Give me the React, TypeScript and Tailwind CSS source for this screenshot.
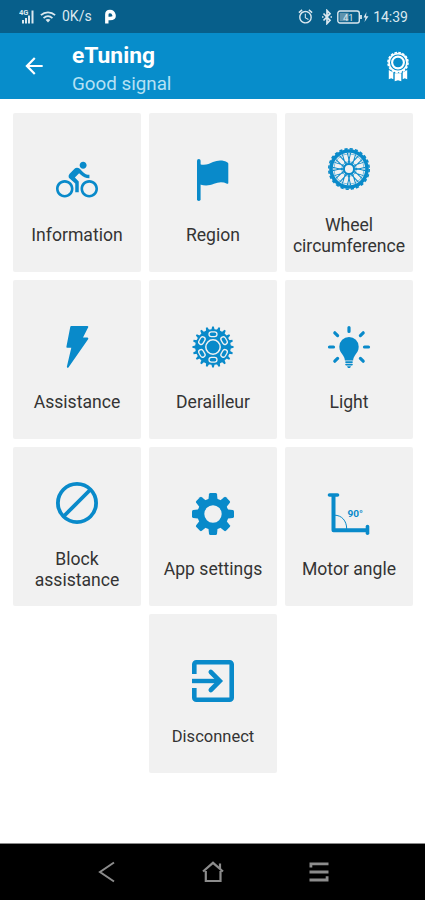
import type { ReactNode } from 'react'
import { clsx } from 'clsx'
import { MdAlarm, MdArrowBack, MdDirectionsBike } from 'react-icons/md'

const range = (count: number) => Array.from({ length: count }, (_, index) => index)

function TileIcon({ children }: { children: ReactNode }) {
  return (
    <svg viewBox="0 0 42 42" className="h-[42px] w-[42px] shrink-0 overflow-visible" fill="currentColor">
      {children}
    </svg>
  )
}

function FlagIcon() {
  return (
    <TileIcon>
      <rect x="5" y="0" width="3.6" height="42" rx="1.8" />
      <path d="M8 5.2C13 6.8 17 4.8 21 3 26 0.8 31.5 1 35.500 3.400a1.500 1.500 0 0 1 .8 1.300v19.200c0 .8-.7 1.100-1.300 .8-4-2-8.500-1.800-13 .1C17.500 26.700 13 27 8 25.500z" />
    </TileIcon>
  )
}

function WheelIcon() {
  return (
    <TileIcon>
      <g fill="none" stroke="currentColor">
        <circle cx="21" cy="21" r="18" strokeWidth="3.600" />
        <circle cx="21" cy="21" r="20.200" strokeWidth="1.600" strokeDasharray="3.200 2.090" />
        <circle cx="21" cy="21" r="15.200" strokeWidth=".5" />
        <circle cx="21" cy="21" r="5" strokeWidth="1.900" />
        <circle cx="21" cy="21" r="7.300" strokeWidth=".5" />
      </g>
      {range(12).map((index) => (
        <g key={index} transform={`rotate(${index * 30} 21 21)`} fill="none" stroke="currentColor" strokeWidth="1">
          <path d="M20 16 22.600 5M22 16 19.400 5" />
        </g>
      ))}
    </TileIcon>
  )
}

function BoltIcon() {
  return (
    <TileIcon>
      <path d="M15.300 0H31.500a.8.8 0 0 1 .7 1.200L27 11.500H31.300c.9 0 1.300 1 .8 1.700L12.600 41.200c-.7 1-2 .5-1.700-.7L15.300 21.800H11.300a.9.9 0 0 1-.9-1.100L14.300.8A1 1 0 0 1 15.300 0z" />
    </TileIcon>
  )
}

function ChainringIcon() {
  return (
    <TileIcon>
      <circle cx="21" cy="21" r="17.800" />
      {range(20).map((index) => (
        <path key={index} d="M19.300 4 20.200 .4H21.800L22.700 4z" transform={`rotate(${index * 18} 21 21)`} />
      ))}
      <circle cx="21" cy="21" r="7.200" fill="none" stroke="#f1f1f1" strokeWidth="1.500" />
      {range(6).map((index) => (
        <g key={index} transform={`rotate(${index * 60} 21 21)`}>
          <rect x="17" y="5.800" width="8" height="4.800" rx="2.400" fill="none" stroke="#f1f1f1" strokeWidth="1.300" />
        </g>
      ))}
    </TileIcon>
  )
}

function BulbIcon() {
  return (
    <TileIcon>
      <path d="M21 11a9.700 9.700 0 0 0-9.700 9.700c0 4 2 6.200 3.800 8.700 1 1.500 1.600 3 1.800 5h8.200c.2-2 .8-3.500 1.800-5 1.800-2.500 3.800-4.700 3.800-8.700A9.700 9.700 0 0 0 21 11z" />
      <rect x="17.200" y="35.300" width="7.600" height="1.700" rx=".8" />
      <rect x="17.200" y="37.700" width="7.600" height="1.700" rx=".8" />
      <path d="M19 40.200h4l-1 1.700h-2z" />
      <path
        d="M21 1.500V5.500M35.200 6.800 32.400 9.600M6.800 6.800 9.600 9.600M1.500 21H5.500M40.500 21H36.500M6.800 35.200 9.600 32.400M35.200 35.200 32.400 32.400"
        fill="none"
        stroke="currentColor"
        strokeWidth="3.200"
        strokeLinecap="round"
      />
    </TileIcon>
  )
}

function BlockIcon() {
  return (
    <TileIcon>
      <g fill="none" stroke="currentColor" strokeWidth="3.800">
        <circle cx="21" cy="21" r="19.100" />
        <path d="M7.500 34.500 34.500 7.500" />
      </g>
    </TileIcon>
  )
}

function GearIcon() {
  return (
    <TileIcon>
      <circle cx="21" cy="21" r="12.200" fill="none" stroke="currentColor" strokeWidth="7" />
      {range(8).map((index) => (
        <path
          key={index}
          d="M16.300 8 17 1.200Q17.200 0 18.400 0H23.600Q24.800 0 25 1.200L25.700 8z"
          transform={`rotate(${index * 45} 21 21)`}
        />
      ))}
    </TileIcon>
  )
}

function AngleIcon() {
  return (
    <TileIcon>
      <g fill="none" stroke="currentColor">
        <path d="M1.500 2H9.500" strokeWidth="3.600" strokeLinecap="round" />
        <path d="M5.500 2V37.200H38.500" strokeWidth="4" strokeLinejoin="round" />
        <path d="M39.500 33.500V40.300" strokeWidth="3.600" strokeLinecap="round" />
        <path d="M6.500 22.200C13.500 22.200 18.700 27.500 18.700 36" strokeWidth="1" />
      </g>
      <text x="19.500" y="24" fontSize="8.200" fontWeight="700" textLength="15.500" lengthAdjust="spacingAndGlyphs">
        90°
      </text>
    </TileIcon>
  )
}

function ExitIcon() {
  return (
    <TileIcon>
      <g fill="none" stroke="currentColor">
        <path d="M2.300 14V4.300a2 2 0 0 1 2-2H37.700a2 2 0 0 1 2 2V37.700a2 2 0 0 1-2 2H4.300a2 2 0 0 1-2-2V28" strokeWidth="4.600" />
        <path d="M0 21H27" strokeWidth="4.400" />
        <path d="M18.800 12 27.800 21 18.800 30" strokeWidth="4.600" strokeLinecap="round" />
      </g>
    </TileIcon>
  )
}

function BadgeIcon() {
  return (
    <svg viewBox="0 0 24 32" className="h-8 w-6" fill="#fff">
      <path d="M2.800 20 7.300 22.500V29.300L5.200 28.200 2.800 29.300zM21.200 20 16.700 22.500V29.300L18.800 28.200 21.200 29.300zM8.700 23.200H15.300V31.300L12 30.300 8.700 31.300z" />
      <circle cx="12" cy="12.500" r="9.800" />
      <circle cx="12" cy="12.500" r="10" fill="none" stroke="#fff" strokeWidth="1.600" strokeDasharray="2.600 1.330" />
      <circle cx="12" cy="12.500" r="7.500" fill="none" stroke="#078dcb" strokeWidth="1.100" />
      <circle cx="12" cy="12.500" r="4.800" fill="#078dcb" />
    </svg>
  )
}

const tiles = [
  { label: 'Information', icon: <MdDirectionsBike className="h-[42px] w-[42px] shrink-0" /> },
  { label: 'Region', icon: <FlagIcon /> },
  { label: 'Wheel circumference', icon: <WheelIcon /> },
  { label: 'Assistance', icon: <BoltIcon /> },
  { label: 'Derailleur', icon: <ChainringIcon /> },
  { label: 'Light', icon: <BulbIcon /> },
  { label: 'Block assistance', icon: <BlockIcon /> },
  { label: 'App settings', icon: <GearIcon /> },
  { label: 'Motor angle', icon: <AngleIcon /> },
  { label: 'Disconnect', icon: <ExitIcon />, compact: true },
]

function StatusBar() {
  return (
    <div className="flex h-[33px] items-center justify-between bg-[#075f8b] pr-[17px] pl-[19px] text-[14px] text-[#dbe8ef]">
      <div className="flex items-center">
        <svg viewBox="0 0 17 17" className="h-[17px] w-[17px]" fill="currentColor">
          <text x="0" y="6.500" fontSize="7.500" fontWeight="700">4G</text>
          <path d="M3 12h2v3.500H3zM6 10h2v5.500H6zM9 7.500h2v8H9zM12.500 2.500h2v13h-2z" />
        </svg>
        <svg viewBox="0 0 18 14" className="ml-[4px] h-[14px] w-[16px]" fill="none" stroke="currentColor" strokeWidth="2">
          <path d="M1 5C5.500 .8 12.500 .8 17 5M4 8.200C7 5.500 11 5.500 14 8.200" />
          <path d="M6.200 10.200C7.800 8.900 10.200 8.900 11.800 10.200L9 13.200z" fill="currentColor" stroke="none" />
        </svg>
        <span className="ml-[6px] w-[30px] whitespace-nowrap">0K/s</span>
        <svg viewBox="0 0 12 16" className="ml-[12px] h-4 w-3" fill="none" stroke="#fff" strokeWidth="3.400">
          <path d="M2.800 14.500V5.500Q2.800 2.500 6 2.500T10 6 6 9.500H2.800" strokeLinejoin="round" />
        </svg>
      </div>
      <div className="flex items-center">
        <MdAlarm className="h-[17px] w-[17px]" />
        <svg viewBox="0 0 12 16" className="ml-[7px] h-4 w-3" fill="none" stroke="currentColor" strokeWidth="1.700">
          <path d="M2.500 4.500 9 11.300 6 14.500V1.500L9 4.700 2.500 11.500" />
          <path d="M1 8H2.500M9.500 8H11" />
        </svg>
        <svg viewBox="0 0 32 14" className="ml-[4px] h-[14px] w-8" fill="none" stroke="currentColor">
          <rect x=".8" y="1" width="21.500" height="12" rx="2.200" strokeWidth="1.400" />
          <rect x="2.600" y="2.800" width="9" height="8.400" fill="#5f93ad" stroke="none" />
          <path d="M24 5V9" strokeWidth="1.800" />
          <path d="M29.500 2 26.500 7.500H28.500L27.500 12 31.500 6.300H29z" fill="currentColor" stroke="none" />
          <text x="6" y="10.500" fontSize="9.500" fill="currentColor" stroke="none">41</text>
        </svg>
        <span className="ml-[4px] leading-5">14:39</span>
      </div>
    </div>
  )
}

function Header() {
  return (
    <header className="flex h-[66px] items-center bg-[#078dcb] pr-[15px] pl-[21px] text-white">
      <MdArrowBack className="h-[26px] w-[26px]" />
      <div className="ml-[25px] flex-1 pt-[7px]">
        <h1 className="text-[22.8px] leading-7 font-bold">eTuning</h1>
        <p className="text-[18.8px] leading-7 text-[#b5e1f4]">Good signal</p>
      </div>
      <BadgeIcon />
    </header>
  )
}

function NavigationBar() {
  return (
    <nav className="flex h-[57px] items-center justify-between border-t border-[#8a8a8a] bg-black pr-[95px] pl-[96px] text-[#8c8c8c]">
      <svg viewBox="0 0 22 22" className="h-[22px] w-[22px]" fill="none" stroke="currentColor" strokeWidth="2">
        <path d="M18 1.500 4 11 18 20.500" />
      </svg>
      <svg viewBox="0 0 22 22" className="h-[22px] w-[22px]" fill="none" stroke="currentColor" strokeWidth="2.200">
        <path d="M1 10.500 11 1.800 21 10.500M18 7.500V2.500M3.800 10V20H18.500V10" />
      </svg>
      <svg viewBox="0 0 22 22" className="h-[22px] w-[22px]" fill="none" stroke="currentColor" strokeWidth="2.800">
        <path d="M20.500 2.800H2.900V6.500M1.500 11H20.500M1.500 19H19.100V15.300" />
      </svg>
    </nav>
  )
}

export default function App() {
  return (
    <div className="flex h-[900px] w-full flex-col overflow-hidden bg-white font-[Roboto,sans-serif]">
      <StatusBar />
      <Header />
      <main className="flex flex-1 flex-wrap content-start justify-center gap-2 pt-[13.5px] pr-3 pl-[13px]">
        {tiles.map((tile) => (
          <button
            key={tile.label}
            className="flex h-[159px] w-[128px] flex-col items-center justify-center rounded-[2px] bg-[#f1f1f1] pt-[21px] text-[#098aca]"
          >
            {tile.icon}
            <span
              className={clsx(
                'mt-[24.5px] px-1 text-center leading-[21px] text-[#343434]',
                tile.compact ? 'text-[16.5px]' : 'text-[17.6px]',
              )}
            >
              {tile.label}
            </span>
          </button>
        ))}
      </main>
      <NavigationBar />
    </div>
  )
}
